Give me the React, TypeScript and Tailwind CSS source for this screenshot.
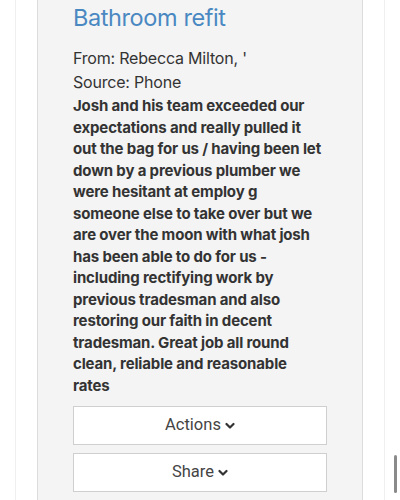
import React from "react";

const review =
  "Josh and his team exceeded our expectations and really pulled it out the bag for us / having been let down by a previous plumber we were hesitant at employ g someone else to take over but we are over the moon with what josh has been able to do for us - including rectifying work by previous tradesman and also restoring our faith in decent tradesman. Great job all round clean, reliable and reasonable rates";

function Chevron() {
  return (
    <svg width="10" height="8" viewBox="0 0 10 8" className="ml-[4px]">
      <path d="M1.5 2 L5 5.5 L8.5 2" fill="none" stroke="#333" strokeWidth="2.2" strokeLinecap="round" strokeLinejoin="round" />
    </svg>
  );
}

function DropButton({ label }: { label: string }) {
  return (
    <button className="flex h-[39px] w-full items-center justify-center border border-[#cfcfcf] bg-white text-[16.5px] text-[#444] [font-family:Roboto,sans-serif]">
      {label}
      <Chevron />
    </button>
  );
}

export default function App() {
  return (
    <div className="h-[500px] w-[400px] overflow-hidden bg-white [font-family:Inter,'Noto_Sans',sans-serif]">
      <div className="relative mx-[15px] h-full border-x border-[#efefef] px-[21px]">
        <div className="h-full border-x border-[#dcdcdc] bg-[#f4f4f4] px-[35px] pt-[2px]">
          <h2 className="text-[23.5px] leading-[32px] tracking-[-0.4px] text-[#4a88c2]">Bathroom refit</h2>
          <div className="mt-[12px] text-[16px] leading-[24px] tracking-[-0.2px] text-[#333]">
            <p>From: Rebecca Milton, '</p>
            <p>Source: Phone</p>
          </div>
          <p className="mt-[1px] w-[250px] text-[15px] font-bold leading-[21.5px] tracking-[-0.15px] text-[#333]">{review}</p>
          <div className="mt-[10px] flex flex-col gap-[8px]">
            <DropButton label="Actions" />
            <DropButton label="Share" />
          </div>
        </div>
      </div>
      <div className="fixed left-[394px] top-[455px] h-[38px] w-[3px] rounded-full bg-[#8a8a8a]" />
    </div>
  );
}
